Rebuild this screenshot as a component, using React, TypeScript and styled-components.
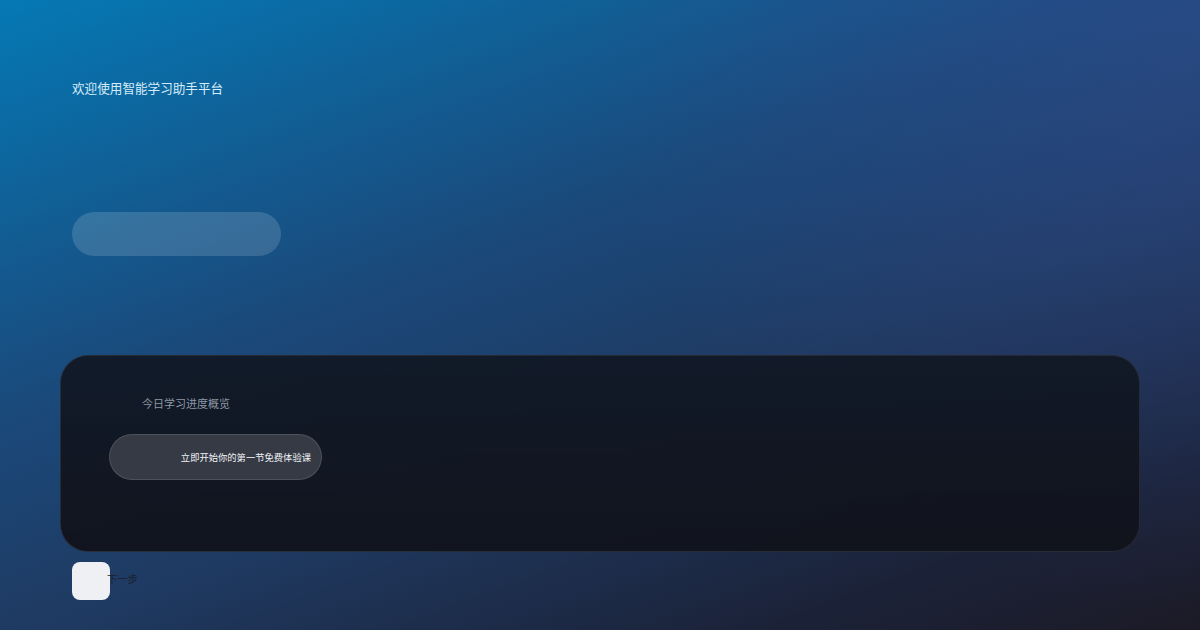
import styled, {createGlobalStyle} from 'styled-components';

const GlobalStyle = createGlobalStyle`
	html, body {
		margin: 0;
		padding: 0;
		height: 100%;
	}
	body {
		font-family: "Inter", "Noto Sans CJK SC", sans-serif;
		background: #1b1a26;
	}
`;

function App() {
	return (
		<>
			<GlobalStyle />
			<Page>
				<Header>
					<Title>欢迎使用智能学习助手平台</Title>
				</Header>
				<GhostButton />
				<Spacer />
				<Card>
					<CardLabel>今日学习进度概览</CardLabel>
					<ChipRow>
						<Chip>立即开始你的第一节免费体验课</Chip>
					</ChipRow>
				</Card>
				<Footer>
					<SquareButton />
					<FooterText>下一步</FooterText>
				</Footer>
			</Page>
		</>
	);
}
export default App;

const Page = styled.div`
	width: 1200px;
	height: 630px;
	box-sizing: border-box;
	padding: 0 60px;
	display: flex;
	flex-direction: column;
	overflow: hidden;
	background:
		radial-gradient(circle at 100% 0%, rgba(52, 76, 145, 0.5), transparent 45%),
		linear-gradient(160deg, #0579b5 0%, #1a4a7c 38%, #1f3a62 60%, #1b2238 85%, #1c1a26 100%);
`;

const Header = styled.div`
	padding: 79px 12px 0;
	height: 20px;
	display: flex;
	align-items: center;
`;

const Title = styled.h1`
	margin: 0;
	font-size: 12.6px;
	line-height: 20px;
	font-weight: 400;
	color: #d6ecf8;
	white-space: nowrap;
`;

const GhostButton = styled.div`
	margin: 113px 0 0 12px;
	width: 209px;
	height: 44px;
	border-radius: 22px;
	background: rgba(255, 255, 255, 0.15);
`;

const Spacer = styled.div`
	height: 99px;
`;

const Card = styled.div`
	height: 197px;
	box-sizing: border-box;
	border-radius: 28px;
	border: 1px solid rgba(255, 255, 255, 0.09);
	background: linear-gradient(180deg, rgba(17, 24, 36, 0.94), rgba(17, 19, 28, 0.96));
	padding: 38px 48px 0;
	display: flex;
	flex-direction: column;
	gap: 20px;
`;

const CardLabel = styled.div`
	padding-left: 33px;
	font-size: 11px;
	line-height: 20px;
	height: 20px;
	color: #8d97a6;
	white-space: nowrap;
`;

const ChipRow = styled.div`
	display: flex;
`;

const Chip = styled.div`
	width: 213px;
	height: 46px;
	box-sizing: border-box;
	border-radius: 23px;
	border: 1px solid rgba(255, 255, 255, 0.12);
	background: #353a45;
	color: #f2f4f7;
	font-size: 9.3px;
	white-space: nowrap;
	display: flex;
	align-items: center;
	justify-content: flex-end;
	padding-right: 10px;
`;

const Footer = styled.div`
	margin-top: 10px;
	padding-left: 12px;
	display: flex;
	align-items: center;
`;

const SquareButton = styled.div`
	width: 38px;
	height: 38px;
	border-radius: 8px;
	background: #eef0f4;
`;

const FooterText = styled.span`
	margin: 0 0 6px -3px;
	font-size: 10.3px;
	color: #1a1f2b;
	white-space: nowrap;
`;
